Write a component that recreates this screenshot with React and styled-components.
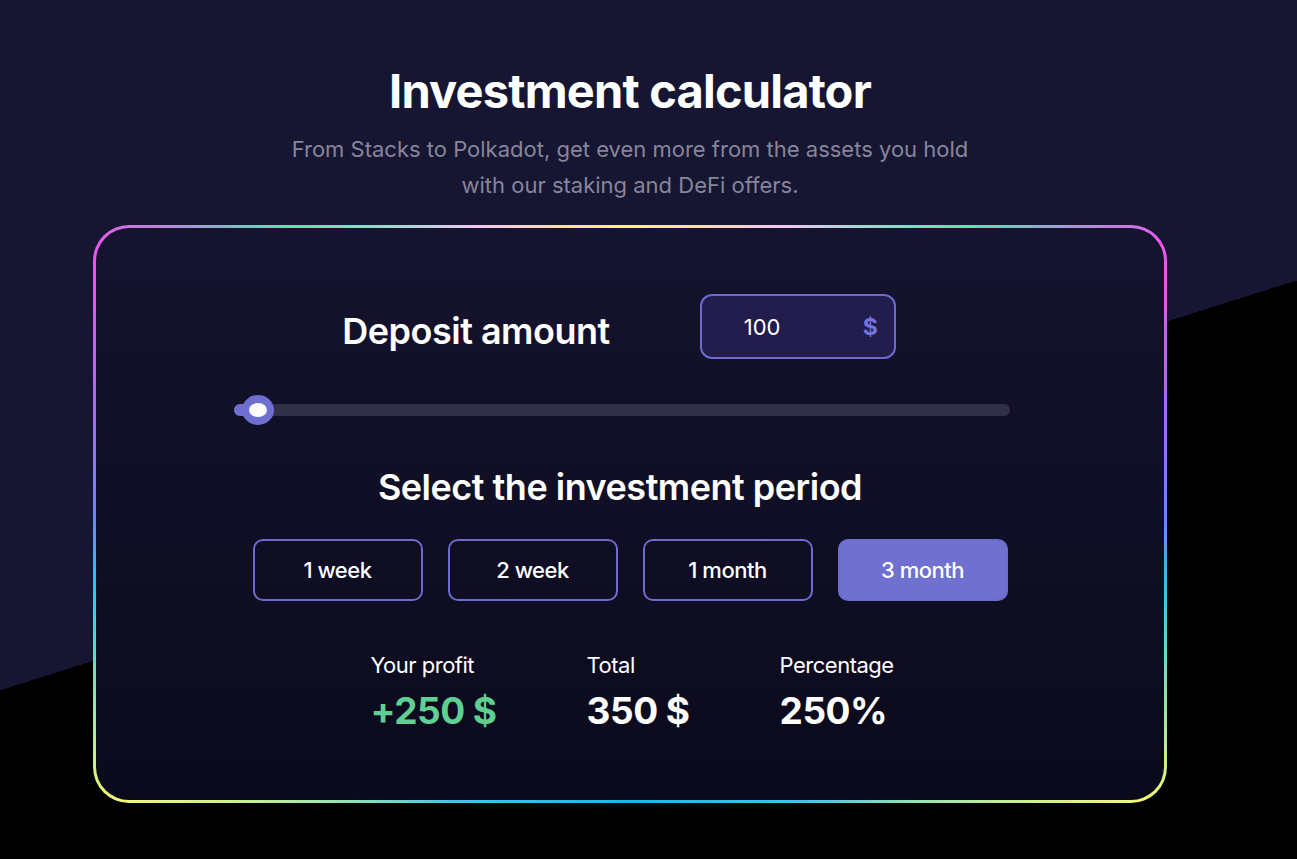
import React, { useState } from 'react'
import styled, { createGlobalStyle } from 'styled-components'

const GlobalStyle = createGlobalStyle`
  * { box-sizing: border-box; }
  html, body { margin: 0; padding: 0; }
  body {
    font-family: Inter, "Noto Sans", Arial, sans-serif;
    color: #fff;
    background: #000;
  }
`

const Page = styled.div`
  min-height: 100vh;
  padding: 62px 130px 0 93px;
  background: linear-gradient(162.46deg, #171632 0%, #171632 54.4%, #000 54.4%, #000 100%);
`

const Header = styled.header`
  display: flex;
  flex-direction: column;
  align-items: center;
  text-align: center;
`

const Title = styled.h1`
  margin: 0;
  font-size: 47px;
  font-weight: 700;
  letter-spacing: -0.8px;
  line-height: 58px;
`

const Subtitle = styled.p`
  margin: 11px 0 0;
  width: 700px;
  font-size: 22px;
  line-height: 36px;
  letter-spacing: 0;
  color: #86859b;
`

const Card = styled.section`
  margin-top: 22px;
  border: 3px solid transparent;
  border-radius: 36px;
  padding: 66px 0 67px;
  background:
    linear-gradient(180deg, #15132e 0%, #0b0a1c 100%) padding-box,
    conic-gradient(from 0deg at 50% 50%,
      #faf56e 0deg, #f4c6f2 28deg, #55e6b4 50deg, #ee55ee 63deg,
      #a46cf2 80deg, #6c84f6 90deg, #38c0f0 98deg, #8ee6a8 109deg,
      #f6f872 119deg, #a8e8a8 132deg, #40c8e8 148deg, #1cb4f8 180deg,
      #40c8e8 212deg, #a8e8a8 228deg, #f6f872 241deg, #8ee6a8 251deg,
      #38c0f0 262deg, #6c84f6 270deg, #a46cf2 280deg, #ee55ee 297deg,
      #55e6b4 310deg, #f4c6f2 332deg, #faf56e 360deg) border-box;
  display: flex;
  flex-direction: column;
  align-items: center;
`

const DepositRow = styled.div`
  display: flex;
  align-items: center;
  gap: 90px;
  margin-right: 22px;
`

const SectionTitle = styled.h2`
  margin: 0;
  font-size: 36px;
  font-weight: 600;
  letter-spacing: -0.5px;
  line-height: 42px;
`

const DepositLabel = styled(SectionTitle)`
  padding-top: 8px;
`

const AmountBox = styled.label`
  width: 196px;
  height: 65px;
  border: 2px solid #6b6bd0;
  border-radius: 12px;
  background: #221d4c;
  display: flex;
  align-items: center;
  padding: 0 16px 0 42px;
`

const AmountInput = styled.input`
  flex: 1;
  min-width: 0;
  background: none;
  border: none;
  outline: none;
  color: #fff;
  font-family: inherit;
  font-size: 22px;
  font-weight: 400;
  padding: 0;
`

const Currency = styled.span`
  color: #7474dc;
  font-size: 23px;
  font-weight: 700;
`

const Slider = styled.div`
  position: relative;
  width: 776px;
  height: 12px;
  margin: 45px 16px 0 0;
  border-radius: 6px;
  background: #322f48;
`

const SliderFill = styled.div`
  height: 100%;
  border-radius: 6px;
  background: #6f6fd2;
`

const Thumb = styled.div`
  position: absolute;
  top: 50%;
  width: 32px;
  height: 30px;
  margin: -15px 0 0 -16px;
  border-radius: 50%;
  background: #6f6fd2;
  display: flex;
  align-items: center;
  justify-content: center;

  &::after {
    content: '';
    width: 18px;
    height: 14px;
    border-radius: 50%;
    background: #fff;
  }
`

const PeriodTitle = styled(SectionTitle)`
  margin: 50px 20px 0 0;
`

const Periods = styled.div`
  display: flex;
  gap: 25px;
  margin-top: 31px;
`

const PeriodButton = styled.button`
  width: 170px;
  height: 62px;
  border-radius: 10px;
  border: 2px solid #6b6bd0;
  background: ${p => (p.$active ? '#7070d0' : 'transparent')};
  color: #fff;
  font-family: inherit;
  font-size: 22px;
  font-weight: 500;
  letter-spacing: -0.5px;
  cursor: pointer;
`

const Stats = styled.div`
  display: flex;
  gap: 90px;
  margin: 50px 0 0 4px;
`

const Stat = styled.div`
  display: flex;
  flex-direction: column;
  gap: 10px;
`

const StatLabel = styled.span`
  font-size: 22px;
  line-height: 28px;
  letter-spacing: -0.5px;
`

const StatValue = styled.span`
  font-size: 37px;
  line-height: 44px;
  font-weight: 700;
  letter-spacing: -0.5px;
  color: ${p => p.$color || '#fff'};
`

const periods = ['1 week', '2 week', '1 month', '3 month']

export default function App() {
  const [amount, setAmount] = useState('100')
  const [period, setPeriod] = useState(3)
  const pct = 0

  return (
    <>
      <GlobalStyle />
      <Page>
        <Header>
          <Title>Investment calculator</Title>
          <Subtitle>
            From Stacks to Polkadot, get even more from the assets you hold with our staking and DeFi offers.
          </Subtitle>
        </Header>
        <Card>
          <DepositRow>
            <DepositLabel>Deposit amount</DepositLabel>
            <AmountBox>
              <AmountInput value={amount} onChange={e => setAmount(e.target.value)} />
              <Currency>$</Currency>
            </AmountBox>
          </DepositRow>
          <Slider>
            <SliderFill style={{ width: `${Math.max(pct, 2)}%` }} />
            <Thumb style={{ left: `calc(${pct}% + 24px)` }} />
          </Slider>
          <PeriodTitle>Select the investment period</PeriodTitle>
          <Periods>
            {periods.map((p, i) => (
              <PeriodButton key={p} $active={i === period} onClick={() => setPeriod(i)}>
                {p}
              </PeriodButton>
            ))}
          </Periods>
          <Stats>
            <Stat>
              <StatLabel>Your profit</StatLabel>
              <StatValue $color="#5fcf92">+250 $</StatValue>
            </Stat>
            <Stat>
              <StatLabel>Total</StatLabel>
              <StatValue>350 $</StatValue>
            </Stat>
            <Stat>
              <StatLabel>Percentage</StatLabel>
              <StatValue>250%</StatValue>
            </Stat>
          </Stats>
        </Card>
      </Page>
    </>
  )
}
